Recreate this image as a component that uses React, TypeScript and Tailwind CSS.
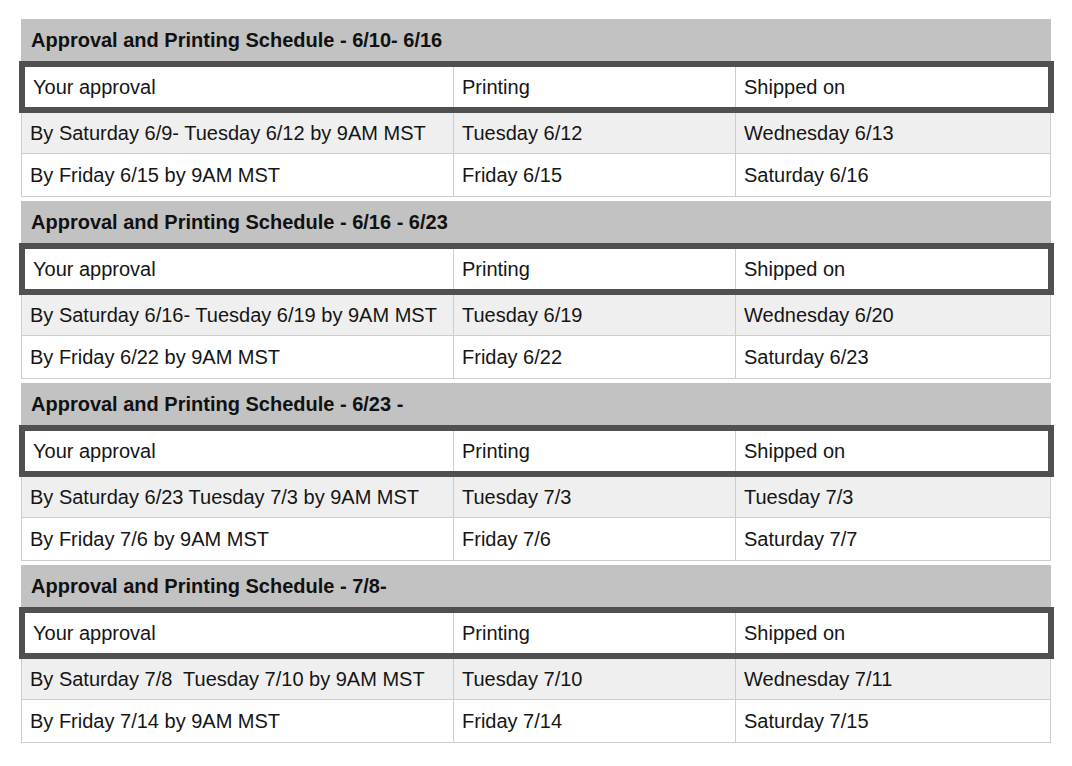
import React from "react";

type Row = { approval: string; printing: string; shipped: string };

type Section = { title: string; rows: Row[] };

const sections: Section[] = [
  {
    title: "Approval and Printing Schedule - 6/10- 6/16",
    rows: [
      { approval: "By Saturday 6/9- Tuesday 6/12 by 9AM MST", printing: "Tuesday 6/12", shipped: "Wednesday 6/13" },
      { approval: "By Friday 6/15 by 9AM MST", printing: "Friday 6/15", shipped: "Saturday 6/16" },
    ],
  },
  {
    title: "Approval and Printing Schedule - 6/16 - 6/23",
    rows: [
      { approval: "By Saturday 6/16- Tuesday 6/19 by 9AM MST", printing: "Tuesday 6/19", shipped: "Wednesday 6/20" },
      { approval: "By Friday 6/22 by 9AM MST", printing: "Friday 6/22", shipped: "Saturday 6/23" },
    ],
  },
  {
    title: "Approval and Printing Schedule - 6/23 -",
    rows: [
      { approval: "By Saturday 6/23 Tuesday 7/3 by 9AM MST", printing: "Tuesday 7/3", shipped: "Tuesday 7/3" },
      { approval: "By Friday 7/6 by 9AM MST", printing: "Friday 7/6", shipped: "Saturday 7/7" },
    ],
  },
  {
    title: "Approval and Printing Schedule - 7/8-",
    rows: [
      { approval: "By Saturday 7/8\u00a0 Tuesday 7/10 by 9AM MST", printing: "Tuesday 7/10", shipped: "Wednesday 7/11" },
      { approval: "By Friday 7/14 by 9AM MST", printing: "Friday 7/14", shipped: "Saturday 7/15" },
    ],
  },
];

const cell = "flex items-center pl-[8px] whitespace-pre";

const ScheduleBlock: React.FC<{ section: Section }> = ({ section }) => {
  return (
    <div className="flex flex-col">
      <div className="h-[42px] bg-[#c1c2c1] flex items-center pl-[10px] font-bold text-[#111]">
        {section.title}
      </div>
      <div className="h-[52px] -ml-[2px] w-[1035px] border-[6px] border-[#505050] bg-white flex">
        <div className={`${cell} w-[429px] border-r border-[#cdcdcd]`}>Your approval</div>
        <div className={`${cell} w-[282px] border-r border-[#cdcdcd]`}>Printing</div>
        <div className={`${cell} flex-1`}>Shipped on</div>
      </div>
      {section.rows.map((row, i) => (
        <div
          key={i}
          className={`flex border-x border-b border-[#cdcdcd] ${i === 0 ? "h-[41px] bg-[#efefef]" : "h-[43px] bg-white"}`}
        >
          <div className={`${cell} w-[432px] border-r border-[#cdcdcd]`}>{row.approval}</div>
          <div className={`${cell} w-[282px] border-r border-[#cdcdcd]`}>{row.printing}</div>
          <div className={`${cell} flex-1`}>{row.shipped}</div>
        </div>
      ))}
    </div>
  );
};

export default function App() {
  return (
    <div
      className="min-h-[766px] bg-white pt-[19px] text-[20px] text-[#151515]"
      style={{ fontFamily: '"Liberation Sans", Arial, sans-serif' }}
    >
      <div className="ml-[21px] w-[1030px] flex flex-col gap-[4px]">
        {sections.map((s) => (
          <ScheduleBlock key={s.title} section={s} />
        ))}
      </div>
    </div>
  );
}
